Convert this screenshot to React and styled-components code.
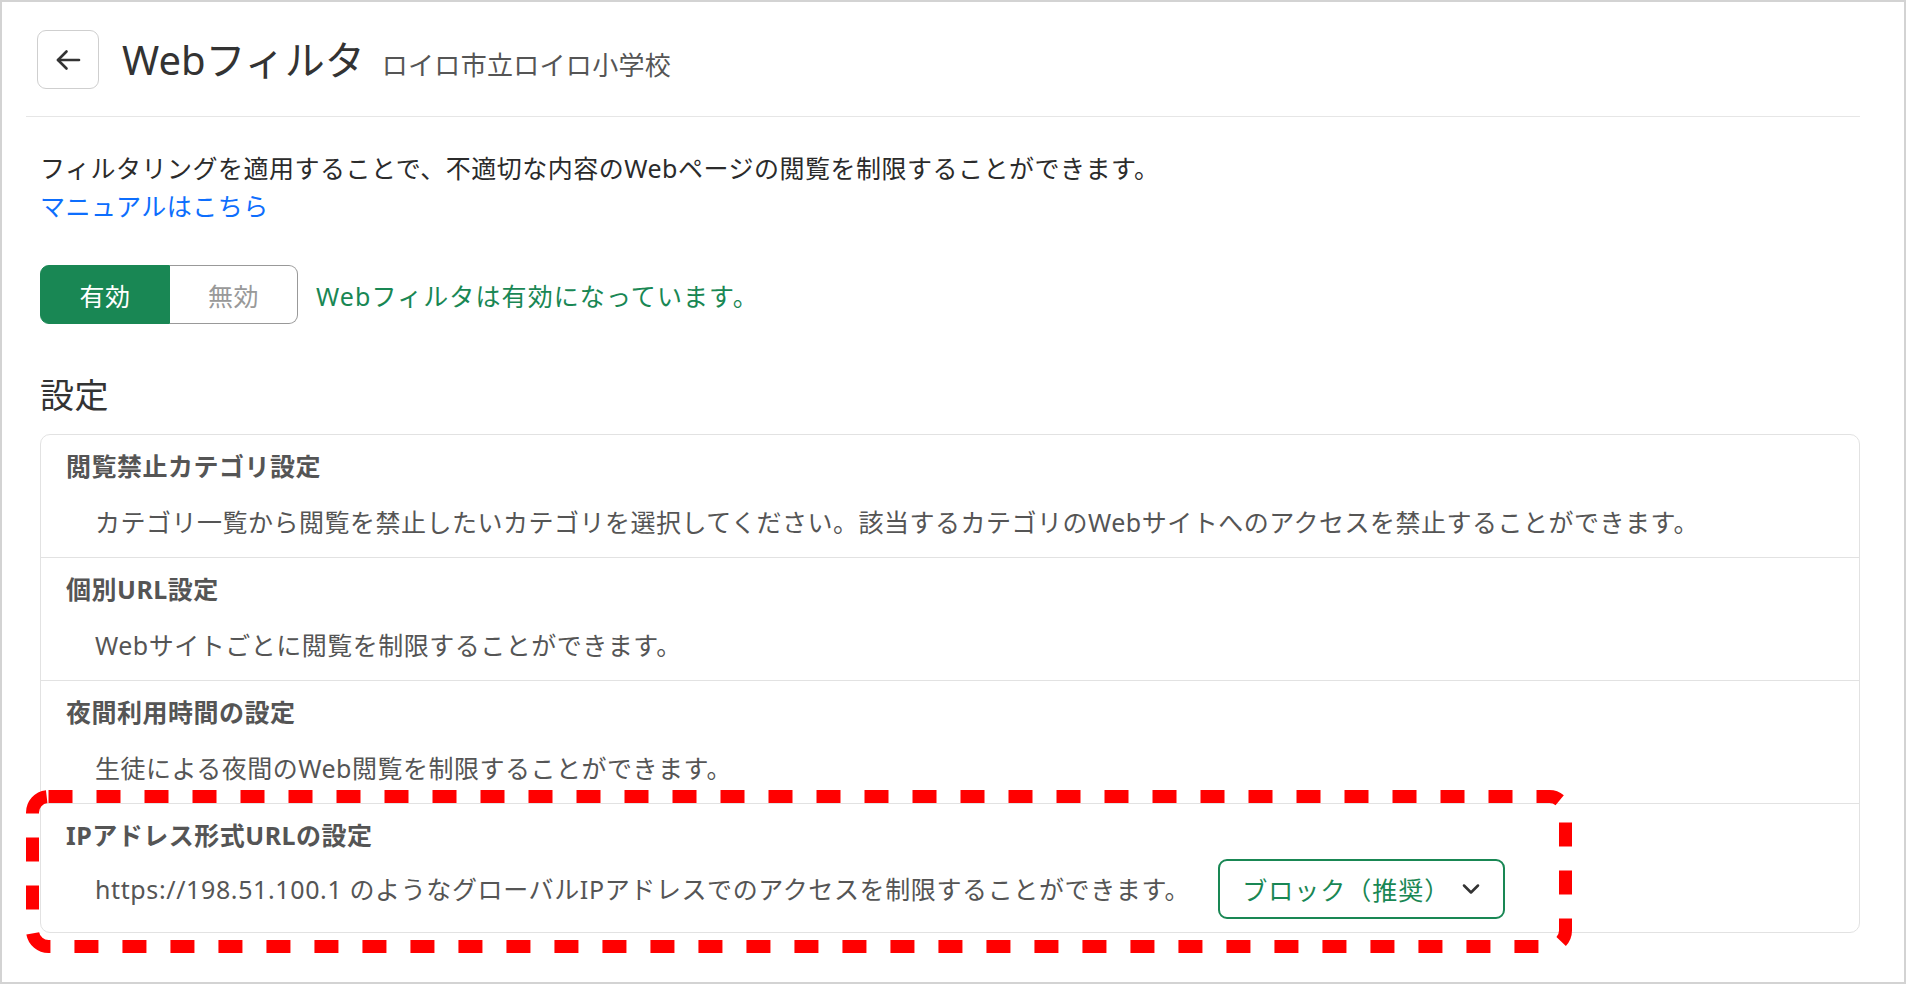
import React from 'react';
import styled, { createGlobalStyle } from 'styled-components';
import { ChevronDown } from 'lucide-react';

const GREEN = '#198754';

const rules = [
    {
        title: '閲覧禁止カテゴリ設定',
        text: 'カテゴリ一覧から閲覧を禁止したいカテゴリを選択してください。該当するカテゴリのWebサイトへのアクセスを禁止することができます。'
    },
    {
        title: '個別URL設定',
        text: 'Webサイトごとに閲覧を制限することができます。'
    },
    {
        title: '夜間利用時間の設定',
        text: '生徒による夜間のWeb閲覧を制限することができます。'
    }
];

const GlobalStyle = createGlobalStyle`
    html, body {
        margin: 0;
        padding: 0;
        background: #fff;
    }
    body {
        font-family: "Noto Sans", "Noto Sans CJK JP", sans-serif;
        letter-spacing: 0.5px;
    }
`;

const BackArrow = () => (
    <svg width="26" height="22" viewBox="0 0 26 22" fill="none" stroke="#333"
         strokeWidth="2.6" strokeLinecap="round" strokeLinejoin="round">
        <path d="M24 11H3"/>
        <path d="M11.5 2.5L3 11l8.5 8.5"/>
    </svg>
);

const App = () => {
    return (
        <>
            <GlobalStyle/>
            <Frame>
                <Main>
                    <Header>
                        <BackButton type="button" aria-label="戻る">
                            <BackArrow/>
                        </BackButton>
                        <Title>Webフィルタ</Title>
                        <SubTitle>ロイロ市立ロイロ小学校</SubTitle>
                    </Header>

                    <Content>
                        <Lead>フィルタリングを適用することで、不適切な内容のWebページの閲覧を制限することができます。</Lead>
                        <ManualLink href="#">マニュアルはこちら</ManualLink>

                        <ToggleRow>
                            <Toggle>
                                <ToggleOption active>有効</ToggleOption>
                                <ToggleOption>無効</ToggleOption>
                            </Toggle>
                            <Status>Webフィルタは有効になっています。</Status>
                        </ToggleRow>

                        <SectionTitle>設定</SectionTitle>

                        <Card>
                            {rules.map((rule, key) =>
                                <Row key={key}>
                                    <RowTitle>{rule.title}</RowTitle>
                                    <RowText>{rule.text}</RowText>
                                </Row>
                            )}
                            <Row last>
                                <RowTitle>IPアドレス形式URLの設定</RowTitle>
                                <RowLine>
                                    <RowText inline>https://198.51.100.1 のようなグローバルIPアドレスでのアクセスを制限することができます。</RowText>
                                    <Select type="button">
                                        <span>ブロック（推奨）</span>
                                        <ChevronDown size={28} strokeWidth={2.2} color="#333"/>
                                    </Select>
                                </RowLine>
                                <Highlight width="1546" height="163" viewBox="0 0 1546 163">
                                    <rect x="6.5" y="6.5" width="1533" height="150" rx="16"
                                          fill="none" stroke="#ff0000" strokeWidth="13"
                                          strokeDasharray="24 24"/>
                                </Highlight>
                            </Row>
                        </Card>
                    </Content>
                </Main>
            </Frame>
        </>
    );
};

export default App;


const Frame = styled.div`
    height: 100vh;
    box-sizing: border-box;
    border: 2px solid #d3d3d3;
    overflow: hidden;
`;

const Main = styled.div`
    padding: 28px 44px 0 24px;
`;

const Header = styled.div`
    display: flex;
    align-items: center;
    padding: 0 0 27px 11px;
    border-bottom: 1px solid #e6e6e6;
`;

const BackButton = styled.button`
    width: 62px;
    height: 59px;
    display: flex;
    align-items: center;
    justify-content: center;
    border: 1px solid #cfcfcf;
    border-radius: 9px;
    background: #fff;
    padding: 0;
    margin-right: 23px;
    cursor: pointer;
`;

const Title = styled.h1`
    margin: 0;
    font-size: 40px;
    font-weight: 400;
    letter-spacing: 0;
    color: #333;
    line-height: 1.2;
`;

const SubTitle = styled.span`
    margin-left: 17px;
    margin-top: 8px;
    font-size: 26px;
    letter-spacing: 0.3px;
    color: #555;
`;

const Content = styled.div`
    padding: 32px 0 0 14px;
`;

const Lead = styled.p`
    margin: 0;
    font-size: 25px;
    line-height: 38px;
    color: #2b2b2b;
`;

const ManualLink = styled.a`
    display: inline-block;
    font-size: 25px;
    line-height: 38px;
    color: #0d6efd;
    text-decoration: none;
`;

const ToggleRow = styled.div`
    display: flex;
    align-items: center;
    margin-top: 40px;
`;

const Toggle = styled.div`
    display: flex;
    height: 59px;
`;

const ToggleOption = styled.button`
    width: ${props => props.active ? 130 : 128}px;
    height: 100%;
    font-family: inherit;
    font-size: 25px;
    letter-spacing: inherit;
    padding: 0;
    cursor: pointer;
    color: ${props => props.active ? '#fff' : '#999'};
    background: ${props => props.active ? GREEN : '#fff'};
    border: 1px solid ${props => props.active ? GREEN : '#999'};
    border-left: ${props => props.active ? `1px solid ${GREEN}` : 'none'};
    border-radius: ${props => props.active ? '9px 0 0 9px' : '0 9px 9px 0'};
`;

const Status = styled.span`
    margin-left: 18px;
    font-size: 25px;
    letter-spacing: 1.1px;
    color: ${GREEN};
`;

const SectionTitle = styled.h2`
    margin: 51px 0 18px;
    font-size: 34px;
    font-weight: 400;
    line-height: 41px;
    color: #333;
`;

const Card = styled.div`
    border: 1px solid #e2e2e2;
    border-radius: 10px;
    background: #fff;
`;

const Row = styled.div`
    position: relative;
    padding: ${props => props.last ? '12px 25px 13px' : '12px 25px 16px'};
    border-bottom: ${props => props.last ? 'none' : '1px solid #e2e2e2'};
`;

const RowTitle = styled.h3`
    margin: 0;
    font-size: 25px;
    font-weight: 700;
    line-height: 38px;
    color: #555;
`;

const RowText = styled.p`
    margin: ${props => props.inline ? '0' : '18px 0 0'};
    padding-left: 29px;
    font-size: 25px;
    line-height: 38px;
    letter-spacing: ${props => props.inline ? '0.62px' : 'inherit'};
    color: #555;
`;

const RowLine = styled.div`
    display: flex;
    align-items: center;
    gap: 28px;
    margin-top: 5px;
`;

const Select = styled.button`
    display: flex;
    align-items: center;
    justify-content: space-between;
    width: 287px;
    height: 60px;
    padding: 0 18px 0 22px;
    box-sizing: border-box;
    border: 2px solid ${GREEN};
    border-radius: 9px;
    background: #fff;
    font-family: inherit;
    font-size: 25px;
    letter-spacing: 1px;
    color: ${GREEN};
    cursor: pointer;
`;

const Highlight = styled.svg`
    position: absolute;
    left: -15px;
    top: -14px;
    pointer-events: none;
`;
